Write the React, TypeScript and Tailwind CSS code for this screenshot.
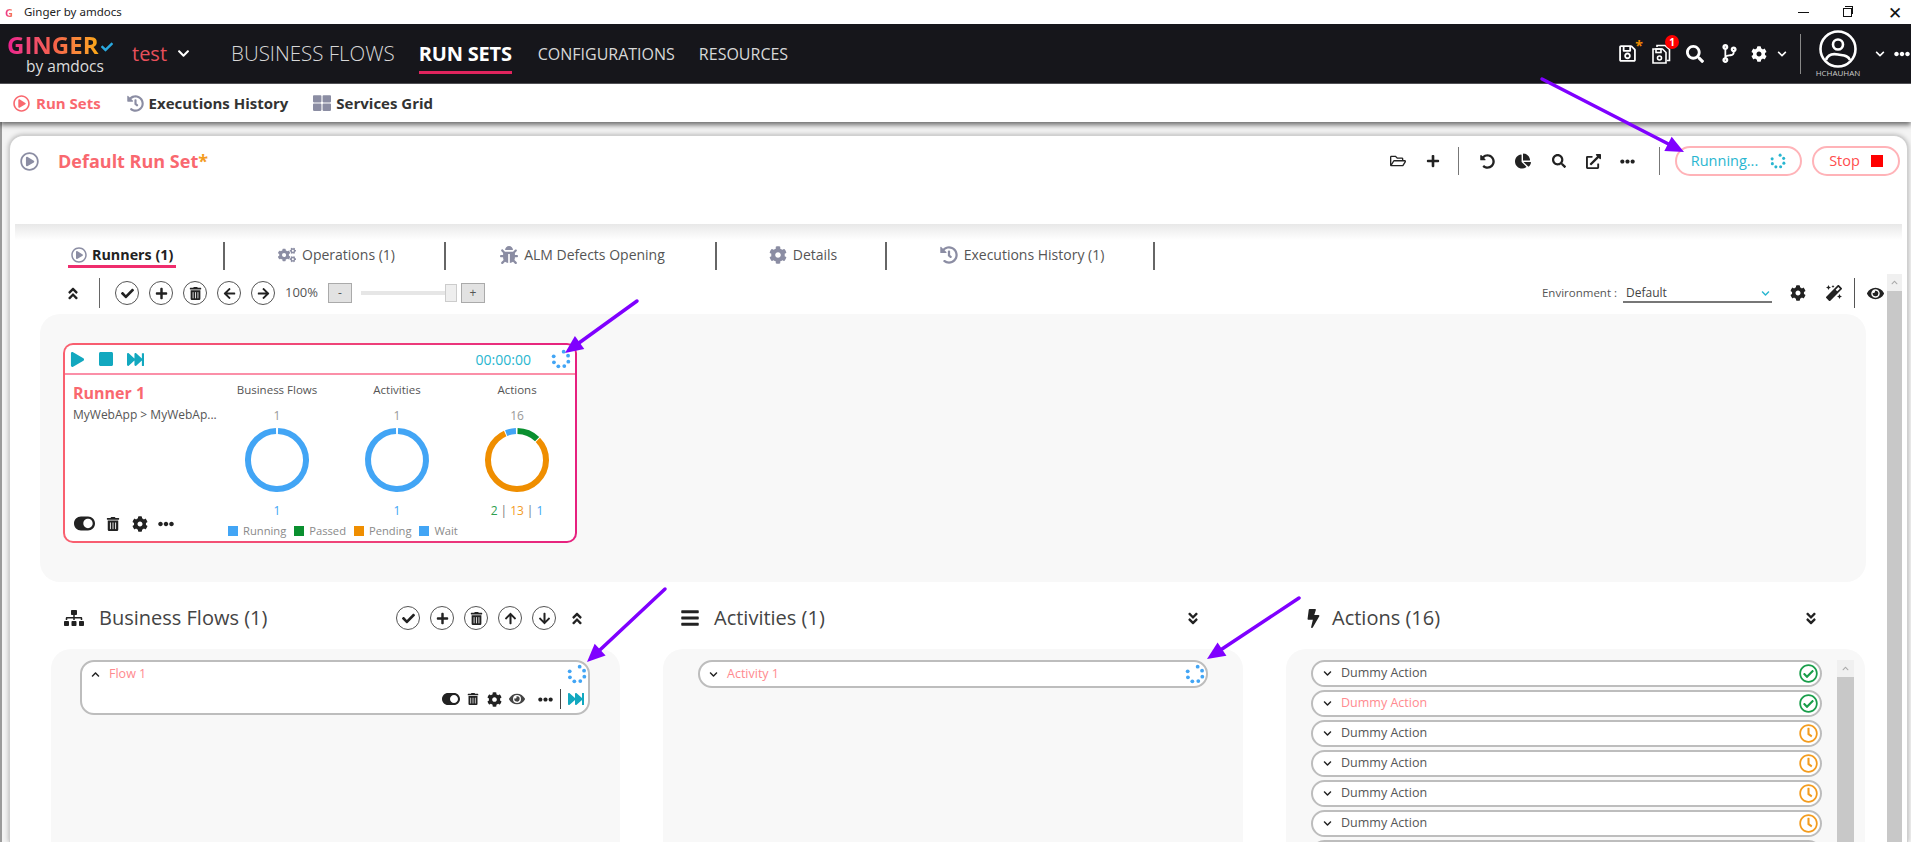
import type { ReactNode } from 'react';
import {
  FaAngleDoubleDown, FaAngleDoubleUp, FaArrowLeft, FaArrowRight, FaArrowUp, FaArrowDown, FaBars, FaBolt, FaBug, FaChartPie, FaCheck,
  FaChevronDown, FaChevronUp, FaCodeBranch, FaCog, FaCogs, FaEllipsisH, FaExternalLinkAlt, FaEye, FaFastForward, FaHistory,
  FaMagic, FaPlay, FaPlus, FaRegCheckCircle, FaRegClock, FaRegFolderOpen, FaRegPlayCircle, FaRegSave, FaSearch, FaSitemap,
  FaStop, FaThLarge, FaToggleOn, FaTrashAlt, FaUndoAlt,
} from 'react-icons/fa';

function Spinner({ size = 18, color = '#42a5f5' }: { size?: number; color?: string }) {
  const dots = [20, 65, 110, 155, 200, 245, 290];
  return (
    <svg width={size} height={size} viewBox="0 0 20 20">
      {dots.map((a) => (
        <circle
          key={a}
          cx={10 + 7.8 * Math.sin((a * Math.PI) / 180)}
          cy={10 - 7.8 * Math.cos((a * Math.PI) / 180)}
          r="1.9"
          fill={color}
        />
      ))}
    </svg>
  );
}

type Segment = { start: number; len: number; color: string };

function Donut({ segments }: { segments: Segment[] }) {
  return (
    <svg width="70" height="70" viewBox="0 0 70 70">
      {segments.map((s) => (
        <circle
          key={s.start}
          cx="35"
          cy="35"
          r="29"
          fill="none"
          stroke={s.color}
          strokeWidth="6"
          pathLength={360}
          strokeDasharray={`${s.len} 360`}
          transform={`rotate(${s.start - 90} 35 35)`}
        />
      ))}
    </svg>
  );
}

function ChartColumn({ title, total, segments, footer }: { title: string; total: string; segments: Segment[]; footer: ReactNode }) {
  return (
    <div className="w-[120px] flex flex-col items-center">
      <div className="mt-[6px] h-[18px] text-[11.5px] leading-[18px] text-[#555]">{title}</div>
      <div className="mt-[8px] h-[18px] text-[12px] leading-[18px] text-[#999]">{total}</div>
      <Donut segments={segments} />
      <div className="mt-[7px] h-[18px] text-[12px] leading-[18px]">{footer}</div>
    </div>
  );
}

function Legend({ color, label }: { color: string; label: string }) {
  return (
    <div className="flex items-center gap-[5px]">
      <span className={`w-[10px] h-[10px] ${color}`} />
      <span className="text-[11.2px] text-[#8a8a8a]">{label}</span>
    </div>
  );
}

function CircleBtn({ children }: { children: ReactNode }) {
  return (
    <div className="w-[24px] h-[24px] rounded-full border border-[#555] flex items-center justify-center text-[#222] text-[13px] shrink-0">
      {children}
    </div>
  );
}

function Tab({ width, icon, label }: { width: string; icon: ReactNode; label: string }) {
  return (
    <div className={`${width} h-[28px] flex items-center justify-center pl-[4px] pb-[3px] border-r-2 border-[#666] text-[14px] text-[#555] gap-[6px]`}>
      <span className="text-[#8b8da3] text-[18px]">{icon}</span>
      <span>{label}</span>
    </div>
  );
}

function ActionRow({ label, status, active }: { label: string; status: 'ok' | 'wait'; active?: boolean }) {
  return (
    <div className="ml-[25px] w-[511px] h-[27px] mb-[3px] shrink-0 rounded-full bg-white border-2 border-[#bdbdbd] flex items-center pl-[10px] pr-[2px]">
      <FaChevronDown className="text-[9px] text-[#222]" />
      <span className={`ml-[9px] text-[12.5px] ${active ? 'text-[#ff8a8f]' : 'text-[#555]'}`}>{label}</span>
      <span className="ml-auto">
        {status === 'ok' ? <FaRegCheckCircle className="text-[19px] text-[#1a9e4b]" /> : <FaRegClock className="text-[19px] text-[#f39c1f]" />}
      </span>
    </div>
  );
}

function Arrows() {
  const arrows = [
    [1542, 79, 1684, 152],
    [637, 301, 565, 353],
    [665, 589, 587, 662],
    [1299, 598, 1207, 659],
  ];
  return (
    <svg className="absolute inset-0 z-20 pointer-events-none" width="1911" height="842">
      {arrows.map(([x1, y1, x2, y2]) => {
        const a = Math.atan2(y2 - y1, x2 - x1);
        const bx = x2 - 18 * Math.cos(a);
        const by = y2 - 18 * Math.sin(a);
        const nx = 8 * Math.sin(a);
        const ny = 8 * Math.cos(a);
        return (
          <g key={x1}>
            <line x1={x1} y1={y1} x2={bx} y2={by} stroke="#7f00ff" strokeWidth="3.5" strokeLinecap="round" />
            <polygon points={`${x2},${y2} ${bx + nx},${by - ny} ${bx - nx},${by + ny}`} fill="#7f00ff" />
          </g>
        );
      })}
    </svg>
  );
}

export default function App() {
  const blue = '#42a5f5';
  const fullBlue: Segment[] = [{ start: 2, len: 356, color: blue }];
  const actionSegments: Segment[] = [
    { start: 1, len: 43, color: '#0a8f2f' },
    { start: 46, len: 290, color: '#ef8e00' },
    { start: 338, len: 20, color: blue },
  ];

  return (
    <div className="relative w-[1911px] h-[842px] overflow-hidden bg-white flex flex-col font-['Open_Sans',sans-serif]">
      {/* window title bar */}
      <div className="h-[24px] shrink-0 flex items-center pl-[5px] text-[11.5px] text-[#222]">
        <span className="w-[10px] text-[11px] font-bold leading-none bg-linear-to-r from-[#ec1c8e] to-[#f7901e] bg-clip-text text-transparent">G</span>
        <span className="ml-[9px] font-['Noto_Sans',sans-serif]">Ginger by amdocs</span>
        <div className="ml-auto flex items-center text-[#111]">
          <span className="w-[11px] h-[1px] bg-[#111] mr-[34px]" />
          <span className="relative w-[9px] h-[9px] border border-[#111] mr-[36px] mt-[1px] before:absolute before:left-[1px] before:top-[-3px] before:w-[8px] before:h-[8px] before:border-t before:border-r before:border-[#111]" />
          <span className="text-[17px] font-light leading-none mr-[9px]">✕</span>
        </div>
      </div>

      {/* main nav */}
      <div className="h-[60px] shrink-0 bg-[#16161b] border-b border-[#55555a] flex items-center text-[#d8d8d8]">
        <div className="ml-[7px] w-[108px] flex flex-col items-start">
          <div className="flex items-end h-[25px]">
            <span className="text-[24px] font-bold leading-[25px] bg-linear-to-r from-[#ec1c8e] via-[#f5604a] to-[#fba90f] bg-clip-text text-transparent">GINGER</span>
            <FaCheck className="ml-[2px] text-[#29a9e0] text-[12px] mb-[4px]" />
          </div>
          <span className="ml-[19px] text-[15.5px] leading-[18px] text-[#ddd]">by amdocs</span>
        </div>
        <span className="ml-[17px] text-[20px] text-[#e8505b]">test</span>
        <FaChevronDown className="ml-[10px] text-[13px] text-white" />
        <span className="ml-[41px] text-[20.5px] font-light">BUSINESS FLOWS</span>
        <div className="ml-[24px] h-[60px] flex flex-col justify-center relative">
          <span className="text-[20px] font-bold text-white tracking-[-0.2px]">RUN SETS</span>
          <span className="absolute left-0 right-0 bottom-[10px] h-[3px] bg-[#e0245e]" />
        </div>
        <span className="ml-[26px] text-[16px]">CONFIGURATIONS</span>
        <span className="ml-[24px] text-[16px]">RESOURCES</span>

        <div className="ml-auto flex items-center text-white">
          <div className="relative">
            <FaRegSave className="text-[19px]" />
            <span className="absolute -right-[6px] -top-[5px] text-[#f08a00] text-[14px] leading-none font-bold">*</span>
          </div>
          <div className="relative ml-[15px]">
            <svg width="19" height="20" viewBox="0 0 19 20" fill="none" stroke="#fff" strokeWidth="1.6">
              <path d="M5 3V1.5h8l4.5 4v11H15" />
              <path d="M1 5h9.5L14 8.5V19H1z" />
              <rect x="4" y="5" width="5" height="3.5" />
              <circle cx="7.5" cy="14" r="2" />
            </svg>
            <span className="absolute -right-[8px] -top-[9px] w-[14px] h-[14px] rounded-full bg-[#f00] text-[10px] leading-[14px] text-center font-bold">1</span>
          </div>
          <FaSearch className="ml-[15px] text-[18px]" />
          <FaCodeBranch className="ml-[16px] text-[19px]" />
          <FaCog className="ml-[12px] text-[16px]" />
          <FaChevronDown className="ml-[10px] text-[10px]" />
          <span className="ml-[13px] w-[1px] h-[40px] bg-[#888]" />
          <div className="ml-[15px] w-[44px] flex flex-col items-center">
            <svg width="38" height="38" viewBox="0 0 38 38" fill="none" stroke="#fff" strokeWidth="2.6">
              <circle cx="19" cy="19" r="17.5" />
              <circle cx="19" cy="14.5" r="5" />
              <path d="M7 30c2-6 7-6.5 12-5.5s10 .5 12 5.5" />
            </svg>
            <span className="text-[8px] leading-[10px] text-[#ccc]">HCHAUHAN</span>
          </div>
          <FaChevronDown className="ml-[15px] text-[10px]" />
          <FaEllipsisH className="ml-[9px] text-[16px] mr-[1px]" />
        </div>
      </div>

      {/* sub nav */}
      <div className="h-[38px] shrink-0 bg-white flex items-center pl-[13px] text-[15px] font-bold text-[#333] shadow-[0_3px_5px_rgba(0,0,0,0.55)] z-10">
        <FaRegPlayCircle className="text-[17px] text-[#f9686f]" />
        <span className="ml-[6px] text-[#f9686f]">Run Sets</span>
        <FaHistory className="ml-[26px] text-[17px] text-[#8b8da3]" />
        <span className="ml-[5px]">Executions History</span>
        <FaThLarge className="ml-[25px] text-[18px] text-[#8b8da3]" />
        <span className="ml-[5px]">Services Grid</span>
      </div>

      {/* run set card */}
      <div className="flex-1 min-h-0 flex border-l-2 border-[#9a9a9a] bg-[#f3f3f3]">
        <div className="ml-[7px] mt-[13px] mr-[3px] flex-1 min-w-0 flex flex-col rounded-t-[14px] bg-white border border-b-0 border-[#d0d0d0] shadow-[0_0_5px_rgba(0,0,0,0.3)]">
          <div className="h-[88px] shrink-0 flex items-start pt-[10px]">
            <div className="h-[30px] flex items-center w-full">
              <FaRegPlayCircle className="ml-[10px] text-[19px] text-[#8b8da3]" />
              <span className="ml-[19px] text-[18px] font-bold text-[#f9686f]">Default Run Set<span className="text-[#f39c1f]">*</span></span>
              <div className="ml-auto flex items-center text-[#222] pr-[7px]">
                <FaRegFolderOpen className="text-[16px]" />
                <FaPlus className="ml-[20px] text-[14px]" />
                <span className="ml-[18px] w-[1px] h-[28px] bg-[#777]" />
                <FaUndoAlt className="ml-[21px] text-[15px]" />
                <FaChartPie className="ml-[20px] text-[16px]" />
                <FaSearch className="ml-[21px] text-[14px]" />
                <FaExternalLinkAlt className="ml-[20px] text-[15px]" />
                <FaEllipsisH className="ml-[19px] text-[15px]" />
                <span className="ml-[24px] w-[1px] h-[28px] bg-[#777]" />
                <div className="ml-[15px] w-[127px] h-[30px] rounded-full border-2 border-[#ffb3b8] flex items-center justify-center gap-[12px] text-[14.5px] text-[#29b6d0]">
                  Running...
                  <Spinner size={16} color="#29b6d0" />
                </div>
                <div className="ml-[10px] w-[88px] h-[30px] rounded-full border-2 border-[#ffb3b8] flex items-center justify-center gap-[11px] text-[14.5px] text-[#ff4d4d]">
                  Stop
                  <span className="w-[12px] h-[12px] bg-[#f00]" />
                </div>
              </div>
            </div>
          </div>
          <div className="h-[16px] shrink-0 mx-[5px] bg-linear-to-b from-[#e8e8e8] to-white" />

          <div className="flex-1 min-h-0 flex">
            <div className="w-[1876px] shrink-0 flex flex-col">
              {/* tabs */}
              <div className="mt-[2px] h-[28px] shrink-0 flex">
                <div className="w-[215px] h-[28px] flex items-center pl-[58px] border-r-2 border-[#666]">
                  <div className="flex items-center gap-[5px] h-[24px] border-b-[3px] border-[#ef2d6d] px-[3px] text-[14.3px] font-bold text-[#222]">
                    <FaRegPlayCircle className="text-[16px] text-[#8b8da3]" />
                    Runners (1)
                  </div>
                </div>
                <Tab width="w-[221px]" icon={<FaCogs />} label="Operations (1)" />
                <Tab width="w-[271px]" icon={<FaBug />} label="ALM Defects Opening" />
                <Tab width="w-[170px]" icon={<FaCog />} label="Details" />
                <Tab width="w-[268px]" icon={<FaHistory />} label="Executions History (1)" />
              </div>

              {/* toolbar */}
              <div className="mt-[8px] h-[30px] shrink-0 flex items-center text-[#222]">
                <FaAngleDoubleUp className="ml-[56px] w-[14px] text-[15px]" />
                <span className="ml-[19px] w-[1px] h-[30px] bg-[#666]" />
                <div className="ml-[15px] flex gap-[10px]">
                  <CircleBtn><FaCheck /></CircleBtn>
                  <CircleBtn><FaPlus /></CircleBtn>
                  <CircleBtn><FaTrashAlt /></CircleBtn>
                  <CircleBtn><FaArrowLeft /></CircleBtn>
                  <CircleBtn><FaArrowRight /></CircleBtn>
                </div>
                <span className="ml-[10px] w-[34px] text-[13px] text-[#555]">100%</span>
                <div className="ml-[9px] w-[24px] h-[20px] bg-[#e2e2e2] border border-[#aaa] text-[12px] leading-[18px] text-center text-[#555]">-</div>
                <div className="ml-[9px] w-[96px] h-[18px] flex items-center">
                  <div className="w-[84px] h-[4px] bg-[#e6e6e6]" />
                  <div className="w-[12px] h-[18px] bg-[#eee] border border-[#ccc]" />
                </div>
                <div className="ml-[4px] w-[24px] h-[20px] bg-[#e2e2e2] border border-[#aaa] text-[12px] leading-[18px] text-center text-[#555]">+</div>

                <div className="ml-auto flex items-center pr-[2px]">
                  <span className="text-[11.5px] text-[#555]">Environment :</span>
                  <div className="ml-[6px] w-[149px] h-[20px] pt-[2px] border-b-2 border-[#777] flex items-center justify-between pl-[3px] pr-[2px] text-[12px] text-[#444]">
                    Default
                    <FaChevronDown className="text-[9px] text-[#29b6d0]" />
                  </div>
                  <FaCog className="ml-[18px] text-[16px]" />
                  <FaMagic className="ml-[20px] text-[16px]" />
                  <span className="ml-[12px] w-[1px] h-[30px] bg-[#555]" />
                  <FaEye className="ml-[12px] text-[17px]" />
                </div>
              </div>

              {/* runner panel */}
              <div className="mt-[6px] ml-[30px] w-[1826px] h-[268px] shrink-0 rounded-[20px] bg-[#f8f8f8] pt-[29px] pl-[23px]">
                <div className="w-[514px] h-[200px] rounded-[10px] p-[2px] bg-linear-to-r from-[#f9606f] to-[#e6207f]">
                  <div className="h-full rounded-[8px] bg-white flex flex-col">
                    <div className="h-[30px] shrink-0 border-b-2 border-[#fb8fa8] flex items-center pl-[5px] text-[#12a8bf]">
                      <FaPlay className="text-[15px]" />
                      <FaStop className="ml-[13px] text-[16px]" />
                      <FaFastForward className="ml-[13px] text-[17px]" />
                      <span className="ml-auto text-[14px] text-[#29b6d0]">00:00:00</span>
                      <span className="ml-[20px] mr-[4px]"><Spinner size={20} /></span>
                    </div>
                    <div className="flex-1 min-h-0 flex">
                      <div className="w-[152px] shrink-0 pl-[8px] flex flex-col whitespace-nowrap">
                        <div className="mt-[6px] h-[24px] text-[16px] leading-[24px] font-bold text-[#f9686f]">Runner 1</div>
                        <div className="mt-[1px] h-[18px] text-[12px] leading-[18px] text-[#555]">MyWebApp &gt; MyWebAp...</div>
                        <div className="mt-auto mb-[7px] flex items-center text-[#222]">
                          <FaToggleOn className="ml-[1px] text-[21px]" />
                          <FaTrashAlt className="ml-[11px] text-[14px]" />
                          <FaCog className="ml-[12px] text-[16px]" />
                          <FaEllipsisH className="ml-[10px] text-[16px]" />
                        </div>
                      </div>
                      <div className="flex flex-col">
                        <div className="flex">
                          <ChartColumn title="Business Flows" total="1" segments={fullBlue} footer={<span className="text-[#42a5f5]">1</span>} />
                          <ChartColumn title="Activities" total="1" segments={fullBlue} footer={<span className="text-[#42a5f5]">1</span>} />
                          <ChartColumn
                            title="Actions"
                            total="16"
                            segments={actionSegments}
                            footer={
                              <>
                                <span className="text-[#2e9e4f]">2</span>
                                <span className="mx-[3px] text-[#777]">|</span>
                                <span className="text-[#f39c1f]">13</span>
                                <span className="mx-[3px] text-[#777]">|</span>
                                <span className="text-[#42a5f5]">1</span>
                              </>
                            }
                          />
                        </div>
                        <div className="pl-[11px] mt-[3px] flex items-center gap-[8px]">
                          <Legend color="bg-[#42a5f5]" label="Running" />
                          <Legend color="bg-[#0a8f2f]" label="Passed" />
                          <Legend color="bg-[#ef8e00]" label="Pending" />
                          <Legend color="bg-[#42a5f5]" label="Wait" />
                        </div>
                      </div>
                    </div>
                  </div>
                </div>
              </div>

              {/* lower columns */}
              <div className="flex-1 min-h-0 mt-[19px] ml-[41px] flex gap-[43px]">
                <div className="w-[569px] flex flex-col">
                  <div className="h-[34px] shrink-0 flex items-center pl-[13px] pr-[36px] text-[#222]">
                    <FaSitemap className="text-[20px]" />
                    <span className="ml-[15px] text-[20px] text-[#444]">Business Flows (1)</span>
                    <div className="ml-auto flex items-center gap-[10px]">
                      <CircleBtn><FaCheck /></CircleBtn>
                      <CircleBtn><FaPlus /></CircleBtn>
                      <CircleBtn><FaTrashAlt /></CircleBtn>
                      <CircleBtn><FaArrowUp /></CircleBtn>
                      <CircleBtn><FaArrowDown /></CircleBtn>
                      <FaAngleDoubleUp className="ml-[4px] w-[14px] text-[15px]" />
                    </div>
                  </div>
                  <div className="mt-[14px] flex-1 min-h-0 rounded-t-[20px] bg-[#f8f8f8] pt-[11px] pl-[29px]">
                    <div className="w-[510px] h-[55px] rounded-[14px] bg-white border-2 border-[#bdbdbd] flex flex-col">
                      <div className="h-[24px] flex items-center pl-[9px] pr-[1px]">
                        <FaChevronUp className="text-[9px] text-[#222]" />
                        <span className="ml-[9px] text-[12.5px] text-[#ff8a8f]">Flow 1</span>
                        <span className="ml-auto"><Spinner size={20} /></span>
                      </div>
                      <div className="h-[26px] flex items-center justify-end pr-[4px] text-[#222]">
                        <FaToggleOn className="text-[18px]" />
                        <FaTrashAlt className="ml-[7px] text-[12px]" />
                        <FaCog className="ml-[8px] text-[15px]" />
                        <FaEye className="ml-[7px] text-[16px] text-[#444]" />
                        <FaEllipsisH className="ml-[13px] text-[15px]" />
                        <span className="ml-[7px] w-[1px] h-[20px] bg-[#444]" />
                        <FaFastForward className="ml-[7px] text-[16px] text-[#12a8bf]" />
                      </div>
                    </div>
                  </div>
                </div>

                <div className="w-[580px] flex flex-col">
                  <div className="h-[34px] shrink-0 flex items-center pl-[17px] pr-[43px] text-[#222]">
                    <FaBars className="text-[20px]" />
                    <span className="ml-[14px] text-[20px] text-[#444]">Activities (1)</span>
                    <FaAngleDoubleDown className="ml-auto w-[14px] text-[15px]" />
                  </div>
                  <div className="mt-[14px] flex-1 min-h-0 rounded-t-[20px] bg-[#f8f8f8] pt-[11px] pl-[35px]">
                    <div className="w-[510px] h-[28px] rounded-full bg-white border-2 border-[#bdbdbd] flex items-center pl-[9px] pr-[1px]">
                      <FaChevronDown className="text-[9px] text-[#222]" />
                      <span className="ml-[9px] text-[12.5px] text-[#ff8a8f]">Activity 1</span>
                      <span className="ml-auto"><Spinner size={20} /></span>
                    </div>
                  </div>
                </div>

                <div className="w-[579px] flex flex-col">
                  <div className="h-[34px] shrink-0 flex items-center pl-[18px] pr-[47px] text-[#222]">
                    <FaBolt className="text-[19px]" />
                    <span className="ml-[9px] text-[20px] text-[#444]">Actions (16)</span>
                    <FaAngleDoubleDown className="ml-auto w-[14px] text-[15px]" />
                  </div>
                  <div className="mt-[14px] flex-1 min-h-0 rounded-t-[20px] bg-[#f8f8f8] pt-[11px] flex overflow-hidden">
                    <div className="w-[551px] flex flex-col">
                      <ActionRow label="Dummy Action" status="ok" />
                      <ActionRow label="Dummy Action" status="ok" active />
                      <ActionRow label="Dummy Action" status="wait" />
                      <ActionRow label="Dummy Action" status="wait" />
                      <ActionRow label="Dummy Action" status="wait" />
                      <ActionRow label="Dummy Action" status="wait" />
                      <ActionRow label="Dummy Action" status="wait" />
                    </div>
                    <div className="w-[17px] flex flex-col">
                      <div className="h-[17px] bg-[#f0f0f0] flex items-center justify-center">
                        <FaChevronUp className="text-[7px] text-[#aaa]" />
                      </div>
                      <div className="flex-1 bg-[#c8c8c8]" />
                    </div>
                  </div>
                </div>
              </div>
            </div>

            {/* page scrollbar */}
            <div className="mt-[34px] ml-[1px] w-[15px] flex flex-col">
              <div className="h-[17px] bg-[#f0f0f0] flex items-center justify-center">
                <FaChevronUp className="text-[7px] text-[#aaa]" />
              </div>
              <div className="flex-1 bg-[#c8c8c8]" />
            </div>
          </div>
        </div>
      </div>

      <Arrows />
    </div>
  );
}
